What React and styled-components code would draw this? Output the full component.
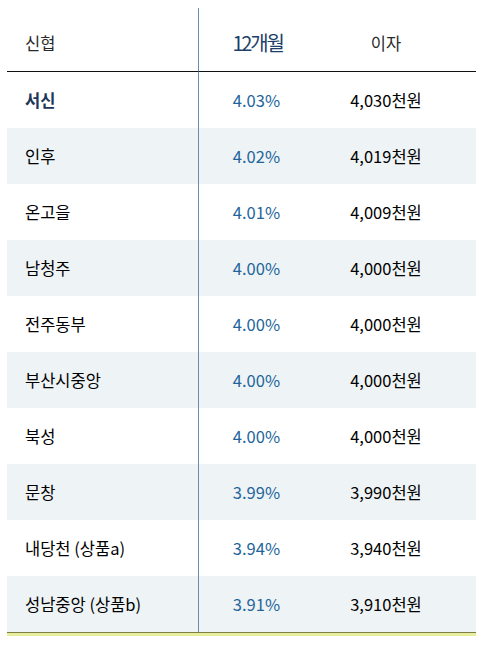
import React from "react";
import styled, { createGlobalStyle } from "styled-components";

const GlobalStyle = createGlobalStyle`
  body {
    margin: 0;
    background: #ffffff;
    font-family: "Noto Sans CJK KR", "Noto Sans", sans-serif;
  }
`;

const Wrapper = styled.div`
  padding: 8px 11px 0 7px;
  width: 469px;
`;

const Table = styled.div`
  display: grid;
  grid-template-columns: 192px 115px 1fr;
  border-bottom: 1px solid #7d7d4a;
`;

const Marker = styled.div`
  height: 3px;
  background: #e8ee9a;
`;

const Row = styled.div`
  display: contents;
  & > div {
    background: ${(p) => (p.$shade ? "#eef3f6" : "#ffffff")};
  }
`;

const HeadCell = styled.div`
  height: 64px;
  box-sizing: border-box;
  padding-top: 6px;
  display: flex;
  align-items: center;
  justify-content: ${(p) => (p.$left ? "flex-start" : "center")};
  padding-left: ${(p) => (p.$left ? "18px" : "0")};
  padding-right: ${(p) => (p.$pr ? "18px" : "0")};
  border-bottom: 1px solid #111;
  border-right: ${(p) => (p.$divider ? "1px solid #6a8cab" : "none")};
  font-size: 16.5px;
  color: #2a2a2a;
`;

const MonthLabel = styled.span`
  font-size: 20px;
  letter-spacing: -2.2px;
  color: #1d3f6b;
  margin-left: 2px;
`;

const Cell = styled.div`
  height: 56px;
  box-sizing: border-box;
  display: flex;
  align-items: center;
  justify-content: ${(p) => (p.$left ? "flex-start" : "center")};
  padding-left: ${(p) => (p.$left ? "18px" : "0")};
  padding-right: ${(p) => (p.$pr ? "18px" : "0")};
  border-right: ${(p) => (p.$divider ? "1px solid #6a8cab" : "none")};
  font-size: 16.5px;
  font-weight: ${(p) => (p.$bold ? 700 : 400)};
  color: ${(p) => p.$color || "#000000"};
`;

const rows = [
  { name: "서신", rate: "4.03%", amount: "4,030천원", bold: true },
  { name: "인후", rate: "4.02%", amount: "4,019천원" },
  { name: "온고을", rate: "4.01%", amount: "4,009천원" },
  { name: "남청주", rate: "4.00%", amount: "4,000천원" },
  { name: "전주동부", rate: "4.00%", amount: "4,000천원" },
  { name: "부산시중앙", rate: "4.00%", amount: "4,000천원" },
  { name: "북성", rate: "4.00%", amount: "4,000천원" },
  { name: "문창", rate: "3.99%", amount: "3,990천원" },
  { name: "내당천 (상품a)", rate: "3.94%", amount: "3,940천원" },
  { name: "성남중앙 (상품b)", rate: "3.91%", amount: "3,910천원" },
];

export default function App() {
  return (
    <Wrapper>
      <GlobalStyle />
      <Table>
        <Row>
          <HeadCell $left $divider>신협</HeadCell>
          <HeadCell>
            <MonthLabel>12개월</MonthLabel>
          </HeadCell>
          <HeadCell $pr>이자</HeadCell>
        </Row>
        {rows.map((r, i) => (
          <Row key={r.name} $shade={i % 2 === 1}>
            <Cell
              $left
              $divider
              $bold={r.bold}
              $color={r.bold ? "#1d3557" : "#000000"}
            >
              {r.name}
            </Cell>
            <Cell $color="#23659a">{r.rate}</Cell>
            <Cell $pr>{r.amount}</Cell>
          </Row>
        ))}
      </Table>
      <Marker />
    </Wrapper>
  );
}
